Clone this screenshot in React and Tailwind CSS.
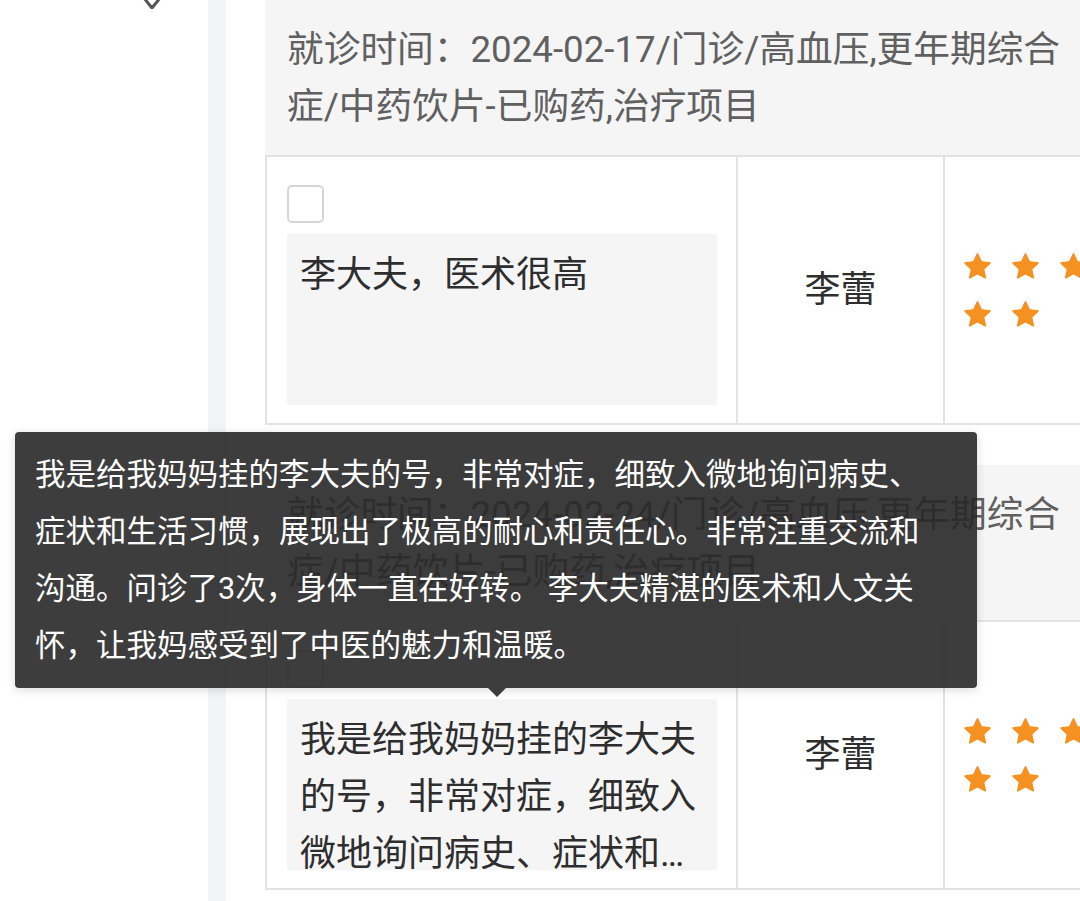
import React from "react"

const tipLines = [
  "我是给我妈妈挂的李大夫的号，非常对症，细致入微地询问病史、",
  "症状和生活习惯，展现出了极高的耐心和责任心。非常注重交流和",
  "沟通。问诊了3次，身体一直在好转。 李大夫精湛的医术和人文关",
  "怀，让我妈感受到了中医的魅力和温暖。",
]

const longText =
  "我是给我妈妈挂的李大夫的号，非常对症，细致入微地询问病史、症状和生活习惯，展现出了极高的耐心和责任心。非常注重交流和沟通。问诊了3次，身体一直在好转。 李大夫精湛的医术和人文关怀，让我妈感受到了中医的魅力和温暖。"

function Star() {
  return (
    <svg viewBox="2.5 2.5 19 18.6" className="w-[27px] h-[26px]">
      <path
        d="M12 3.2l2.7 5.7 6.2.8-4.6 4.3 1.2 6.2L12 17.1l-5.5 3.1 1.2-6.2-4.6-4.3 6.2-.8z"
        fill="#f59121"
        stroke="#f59121"
        strokeWidth="1.2"
        strokeLinejoin="round"
      />
    </svg>
  )
}

function Record({ date, text }) {
  return (
    <div className="w-[880px]">
      {/* visit header */}
      <div className="bg-[#f5f5f5] pl-[22px] pt-[21px] pb-[20px] text-[36.7px] leading-[57px] text-[#606060] whitespace-nowrap">
        <div>就诊时间：{date}/门诊/高血压,更年期综合</div>
        <div>症/中药饮片-已购药,治疗项目</div>
      </div>

      {/* comment row */}
      <div className="flex h-[270px] border-2 border-[#e3e3e3] bg-white">
        <div className="w-[469px] shrink-0 pl-[20px] pr-[19px] pt-[28px]">
          <div className="w-[37px] h-[38px] border-2 border-[#d6d6d6] rounded-[5px] bg-white" />
          <div className="mt-[11px] h-[171px] overflow-hidden bg-[#f5f5f5] px-[13px] pt-[13px] text-[36px] leading-[57px] text-[#2e2e2e]">
            <p className="line-clamp-3">{text}</p>
          </div>
        </div>
        <div className="w-[207px] shrink-0 border-l-2 border-[#e3e3e3] flex items-center justify-center text-[36px] text-[#2e2e2e]">
          李蕾
        </div>
        <div className="flex-1 border-l-2 border-[#e3e3e3] flex items-center pl-[19px]">
          <div className="grid grid-cols-[27px_27px_27px] gap-x-[21px] gap-y-[22px]">
            <Star />
            <Star />
            <Star />
            <Star />
            <Star />
          </div>
        </div>
      </div>
    </div>
  )
}

export default function App() {
  return (
    <div className="relative w-[1080px] h-[901px] overflow-hidden bg-white flex font-['Roboto','Noto_Sans_CJK_SC',sans-serif]">
      {/* left menu */}
      <div className="w-[208px] shrink-0 bg-white">
        <svg viewBox="0 0 28 20" className="w-[28px] h-[20px] ml-[138px] -mt-[11px]">
          <path d="M2 4l12 15L26 4" fill="none" stroke="#555" strokeWidth="3" strokeLinecap="round" strokeLinejoin="round" />
        </svg>
      </div>
      <div className="w-[18px] shrink-0 bg-[#f3f4f7]" />

      {/* records */}
      <div className="flex-1 min-w-0 pl-[39px] flex flex-col gap-[40px]">
        <Record date="2024-02-17" text="李大夫，医术很高" />
        <Record date="2024-02-24" text={longText} />
      </div>

      {/* tooltip */}
      <div className="absolute left-[15px] top-[432px] w-[962px] rounded-[4px] bg-[rgba(40,40,40,0.9)] px-[20px] pt-[14px] pb-[14px] text-[30.5px] leading-[57px] text-white whitespace-nowrap shadow-[0_2px_10px_rgba(0,0,0,0.15)]">
        {tipLines.map((line) => (
          <div key={line}>{line}</div>
        ))}
        <div className="absolute left-[473px] top-full w-0 h-0 border-x-[9px] border-t-[9px] border-x-transparent border-t-[rgba(40,40,40,0.9)]" />
      </div>
    </div>
  )
}
